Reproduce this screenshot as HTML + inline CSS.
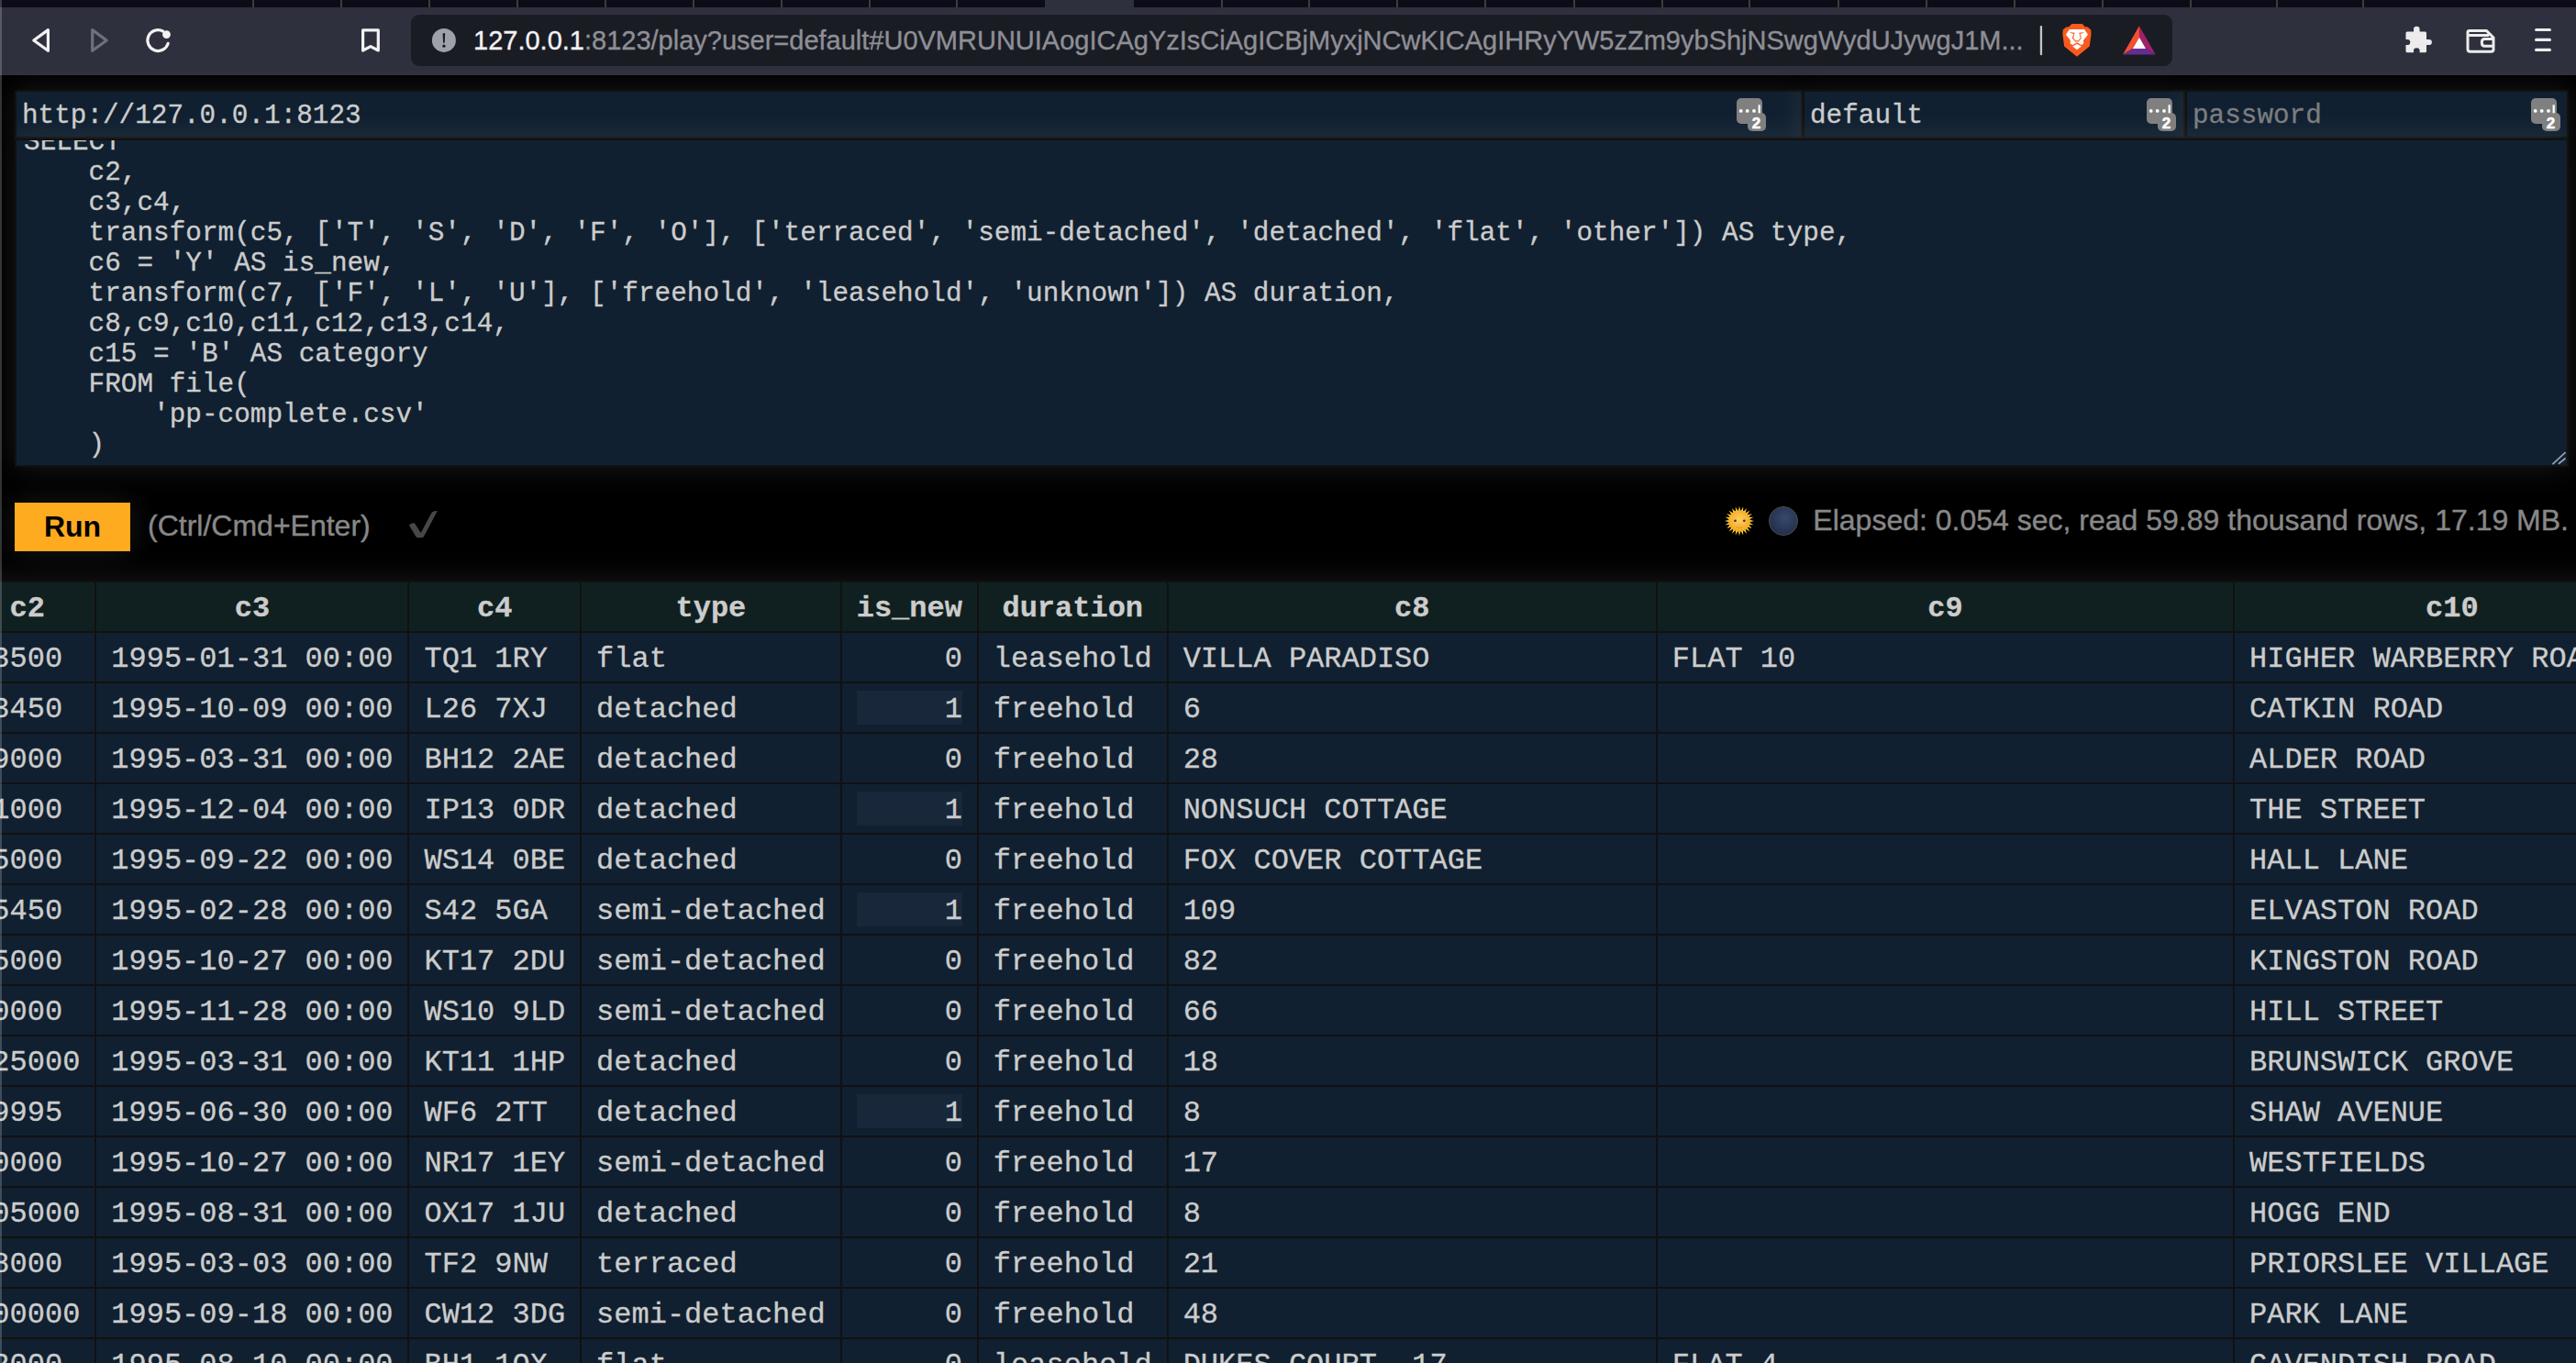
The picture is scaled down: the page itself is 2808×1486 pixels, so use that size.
<!DOCTYPE html>
<html><head><meta charset="utf-8">
<style>
html,body{margin:0;padding:0;}
body{width:2808px;height:1486px;overflow:hidden;position:relative;background:#000;font-family:"Liberation Sans",sans-serif;}
.abs{position:absolute;}
#tabs{left:0;top:0;width:2808px;height:8px;background:#0b0c17;}
#tabs i{position:absolute;top:0;width:2px;height:8px;background:#3d3c38;}
#acttab{position:absolute;left:1139px;top:0;width:97px;height:8px;background:#2e303e;}
#toolbar{left:0;top:8px;width:2808px;height:74px;background:#2e303e;}
#winborder{left:0;top:0;width:2px;height:1486px;background:rgba(255,255,255,0.2);z-index:50;}
#addr{left:448px;top:16px;width:1920px;height:56px;border-radius:9px;background:#1a1c24;}
#addrtext{z-index:6;left:516px;top:24px;font-size:29px;line-height:40px;color:#8e8f96;white-space:nowrap;-webkit-text-stroke:0.35px #8e8f96;}
#addrtext b{-webkit-text-stroke:0.35px #f2f2f4;}
#addrtext b{font-weight:normal;color:#f2f2f4;}
/* page */
.mono{font-family:"Liberation Mono",monospace;}
.shadow{box-shadow:0 0 32px rgba(255,255,255,0.1);}
.inp{position:absolute;top:98px;height:53px;box-sizing:border-box;border:2px solid #111;background:#102030;color:#ccc;font-size:29.33px;line-height:33px;padding:10px 8px 6px 6px;-webkit-text-stroke:0.3px currentColor;}
#url{left:16px;width:1949px;}
#user{left:1965px;width:417px;}
#pass{left:2382px;width:418px;color:#7b7d80;}
#query{position:absolute;left:16px;top:151px;width:2784px;height:358px;box-sizing:border-box;border:2px solid #111;background:#102030;color:#ccc;font-size:29.33px;line-height:33px;overflow:hidden;letter-spacing:0.03px;-webkit-text-stroke:0.3px #ccc;}
#query pre{margin:0;font:inherit;position:absolute;left:8px;top:-14px;white-space:pre;}
#run{position:absolute;left:16px;top:548px;width:126px;height:53px;background:#ffab1f;color:#000;font-weight:bold;font-size:32px;line-height:53px;text-align:center;}
#hint{position:absolute;left:161px;top:536px;font-size:32px;line-height:74px;color:#888;-webkit-text-stroke:0.4px #888;}

#stats{position:absolute;right:8px;top:542px;font-size:32px;line-height:50px;color:#888;white-space:nowrap;-webkit-text-stroke:0.4px #888;}
#data{position:absolute;left:-45.9px;top:633px;width:3400px;}
.tr{display:flex;height:55px;}
.c{flex:none;box-sizing:border-box;border-left:2px solid #111;border-top:2px solid #111;padding:10px 16px 6px;height:55px;line-height:37px;background:#102030;color:#ccc;font-size:32px;white-space:pre;overflow:hidden;-webkit-text-stroke:0.3px #ccc;}
.th .c{background:#102020;font-weight:bold;text-align:center;}
.c.r{text-align:right;}
.c.bar{background:linear-gradient(#18283a,#18283a) 16px 8px/calc(100% - 32px) 37px no-repeat,#102030;}
.w0{width:149.2px}.w1{width:341.2px}.w2{width:187.6px}.w3{width:283.6px}.w4{width:149.2px}.w5{width:206.8px}.w6{width:533.2px}.w7{width:629.2px}.w8{width:475.6px}
</style></head>
<body>
<div id="tabs" class="abs"><i style="left:275.2px"></i><i style="left:370.6px"></i><i style="left:467.0px"></i><i style="left:563.0px"></i><i style="left:659.4px"></i><i style="left:754.8px"></i><i style="left:850.7px"></i><i style="left:946.6px"></i><i style="left:1042.0px"></i><i style="left:1331.0px"></i><i style="left:1425.8px"></i><i style="left:1522.3px"></i><i style="left:1618.2px"></i><i style="left:1714.6px"></i><i style="left:1810.5px"></i><i style="left:1906.4px"></i><i style="left:2003.0px"></i><i style="left:2098.8px"></i><i style="left:2194.7px"></i><i style="left:2290.6px"></i><i style="left:2386.5px"></i><i style="left:2481.4px"></i><i style="left:2574.6px"></i><div id="acttab"></div></div>
<div id="toolbar" class="abs"></div>
<div id="addr" class="abs"></div>
<svg id="icons" class="abs" style="left:0;top:0;z-index:5" width="2808" height="82" viewBox="0 0 2808 82">
<g fill="none" stroke-linecap="round" stroke-linejoin="round" stroke-width="3.2">
<path d="M52.4 32.6 L36.8 44 L52.4 55.2 Z" stroke="#f2f2f2"/>
<path d="M100.7 32.6 L116.2 44 L100.7 55.2 Z" stroke="#6e717d"/>
<path d="M183.2 47.4 A11.4 11.4 0 1 1 177.6 34" stroke="#f2f2f2"/>
<path d="M395.6 32.8 H412.3 V55 L404 50.6 L395.6 55 Z" stroke="#f2f2f2"/>
<path d="M2764.6 32.5 H2779.4 M2764.6 43.4 H2779.4 M2764.6 54.4 H2779.4" stroke="#ececec"/>
<path d="M2690 35 Q2690 33.6 2692 33.6 H2710.5 L2718 41 V54 Q2718 56.2 2715.5 56.2 H2692.5 Q2690 56.2 2690 53.5 Z M2691.5 38.6 H2712" stroke="#ececec" stroke-width="3"/>
<path d="M2716.5 42.5 H2708.5 Q2705.3 42.5 2705.3 46.3 Q2705.3 50.3 2708.5 50.3 H2716.5" stroke="#ececec" stroke-width="3"/>
</g>
<circle cx="181.5" cy="37.6" r="4.4" fill="#f2f2f2"/>
<path fill="#ececec" d="M2622.5 36 Q2622.5 34.4 2624 34.4 H2631 V32 A3.3 3.3 0 0 1 2637.6 32 V34.4 H2643.5 Q2645 34.4 2645 36 V42.9 H2647.8 A3.1 3.1 0 0 1 2647.8 49.1 H2645 V55.8 Q2645 57.3 2643.5 57.3 H2637.6 V55.6 A3.3 3.3 0 0 0 2631 55.6 V57.3 H2624 Q2622.5 57.3 2622.5 55.8 V49.1 H2624.2 A3.1 3.1 0 0 0 2624.2 42.9 H2622.5 Z"/>
<circle cx="483.9" cy="43.9" r="13" fill="#9ea1a9"/>
<path d="M482.6 36.2 H485.2 L484.7 46.8 H483.1 Z" fill="#191b23"/>
<circle cx="483.9" cy="50.2" r="1.6" fill="#191b23"/>
<rect x="2223.8" y="28" width="2.3" height="32.2" rx="1" fill="#c2c3c7"/>
<path fill="#fb5a1f" d="M2258.38 26.05 L2269.83 26.05 L2272.76 29.28 L2275.69 29.58 L2279.22 32.51 L2279.51 37.50 L2277.75 50.41 L2263.96 61.86 L2250.16 50.41 L2248.40 37.50 L2248.70 32.51 L2252.22 29.58 L2255.15 29.28 Z"/>
<path fill="#ffffff" d="M2255.74 31.92 L2272.17 31.92 L2275.99 37.79 L2271.00 43.96 L2271.29 47.48 L2268.94 48.94 L2263.96 46.30 L2259.26 48.94 L2256.62 47.48 L2256.91 43.96 L2251.92 37.79 Z"/>
<path fill="#fb5a1f" d="M2255.74 35.01 L2261.61 35.74 L2260.14 41.61 L2262.49 44.25 L2265.42 44.25 L2267.77 41.61 L2266.30 35.74 L2272.17 35.01 L2269.83 36.33 L2267.48 36.91 L2268.94 41.61 L2265.72 45.42 L2262.20 45.42 L2258.67 41.61 L2260.43 36.91 L2258.09 36.33 Z"/>
<path fill="#ffffff" d="M2259.26 50.41 L2263.96 48.06 L2268.94 50.41 L2263.96 54.23 Z"/>
<path fill="#f4502f" d="M2331.9 28.2 L2314 59.6 L2324.8 53 L2332 40.7 Z"/>
<path fill="#a21f6a" d="M2331.9 28.2 L2349.8 59.6 L2339 53 L2332 40.7 Z"/>
<path fill="#662d91" d="M2314 59.6 H2349.8 L2339 53 H2324.8 Z"/>
<path fill="#ffffff" d="M2332 40.7 L2324.8 53 H2339 Z"/>
</svg>
<div id="addrtext" class="abs"><b>127.0.0.1</b>:8123/play?user=default#U0VMRUNUIAogICAgYzIsCiAgICBjMyxjNCwKICAgIHRyYW5zZm9ybShjNSwgWydUJywgJ1M...</div>

<div class="inp mono shadow" id="url">http://127.0.0.1:8123</div>
<div class="inp mono shadow" id="user">default</div>
<div class="inp mono shadow" id="pass">password</div>
<div id="query" class="mono shadow"><pre>SELECT
    c2,
    c3,c4,
    transform(c5, ['T', 'S', 'D', 'F', 'O'], ['terraced', 'semi-detached', 'detached', 'flat', 'other']) AS type,
    c6 = 'Y' AS is_new,
    transform(c7, ['F', 'L', 'U'], ['freehold', 'leasehold', 'unknown']) AS duration,
    c8,c9,c10,c11,c12,c13,c14,
    c15 = 'B' AS category
    FROM file(
        'pp-complete.csv'
    )</pre></div>
<svg class="abs" style="left:1893px;top:107px;z-index:4" width="34" height="38" viewBox="0 0 34 38">
<rect x="0" y="0" width="28" height="28" rx="5" fill="#808080"/>
<rect x="12" y="16" width="20" height="20" rx="5" fill="#808080"/>
<circle cx="4.7" cy="13.9" r="1.9" fill="#fff"/><circle cx="11.7" cy="13.9" r="1.9" fill="#fff"/><circle cx="19" cy="13.9" r="1.9" fill="#fff"/>
<rect x="23.6" y="7.3" width="2.2" height="9" fill="#fff"/>
<text x="21.5" y="33" font-family="Liberation Sans" font-weight="bold" font-size="17" fill="#fff" stroke="#fff" stroke-width="0.6" text-anchor="middle">2</text>
</svg><svg class="abs" style="left:2340px;top:107px;z-index:4" width="34" height="38" viewBox="0 0 34 38">
<rect x="0" y="0" width="28" height="28" rx="5" fill="#808080"/>
<rect x="12" y="16" width="20" height="20" rx="5" fill="#808080"/>
<circle cx="4.7" cy="13.9" r="1.9" fill="#fff"/><circle cx="11.7" cy="13.9" r="1.9" fill="#fff"/><circle cx="19" cy="13.9" r="1.9" fill="#fff"/>
<rect x="23.6" y="7.3" width="2.2" height="9" fill="#fff"/>
<text x="21.5" y="33" font-family="Liberation Sans" font-weight="bold" font-size="17" fill="#fff" stroke="#fff" stroke-width="0.6" text-anchor="middle">2</text>
</svg><svg class="abs" style="left:2759px;top:107px;z-index:4" width="34" height="38" viewBox="0 0 34 38">
<rect x="0" y="0" width="28" height="28" rx="5" fill="#808080"/>
<rect x="12" y="16" width="20" height="20" rx="5" fill="#808080"/>
<circle cx="4.7" cy="13.9" r="1.9" fill="#fff"/><circle cx="11.7" cy="13.9" r="1.9" fill="#fff"/><circle cx="19" cy="13.9" r="1.9" fill="#fff"/>
<rect x="23.6" y="7.3" width="2.2" height="9" fill="#fff"/>
<text x="21.5" y="33" font-family="Liberation Sans" font-weight="bold" font-size="17" fill="#fff" stroke="#fff" stroke-width="0.6" text-anchor="middle">2</text>
</svg>
<svg class="abs" style="left:2780px;top:490px;z-index:3" width="20" height="20" viewBox="0 0 20 20"><path d="M3 15.7 L16 3.6 M9.5 15.2 L16 10" stroke="#9a9ea6" stroke-width="1.8" stroke-linecap="round"/></svg>
<div id="run" class="shadow">Run</div>
<div id="hint">(Ctrl/Cmd+Enter)</div>
<svg class="abs" style="left:0;top:0" width="500" height="600" viewBox="0 0 500 600"><path d="M445.9 572.6 Q448.5 570 451.8 570.2 L458.7 580.9 L470.8 558.4 Q473.5 557 476.8 557.1 L462 585 Q461 586.3 459.5 586.3 L455.2 586.2 Q454 586.1 453.3 585 Z" fill="#474747"/></svg>
<svg class="abs" style="left:1880.3px;top:552.2px" width="32" height="32" viewBox="0 0 31.4 31.4">
<defs><radialGradient id="sg" cx="50%" cy="45%" r="55%"><stop offset="0" stop-color="#ffd25a"/><stop offset="1" stop-color="#f5a623"/></radialGradient>
<radialGradient id="mg" cx="55%" cy="40%" r="60%"><stop offset="0" stop-color="#36496c"/><stop offset="1" stop-color="#222f4a"/></radialGradient></defs>
<path d="M26.64 14.55L31.50 15.70L26.64 16.85ZM26.56 17.42L30.96 19.79L25.97 19.64ZM25.75 20.17L29.38 23.60L24.60 22.17ZM24.25 22.62L26.87 26.87L22.62 24.25ZM22.17 24.60L23.60 29.38L20.17 25.75ZM19.64 25.97L19.79 30.96L17.42 26.56ZM16.85 26.64L15.70 31.50L14.55 26.64ZM13.98 26.56L11.61 30.96L11.76 25.97ZM11.23 25.75L7.80 29.38L9.23 24.60ZM8.78 24.25L4.53 26.87L7.15 22.62ZM6.80 22.17L2.02 23.60L5.65 20.17ZM5.43 19.64L0.44 19.79L4.84 17.42ZM4.76 16.85L-0.10 15.70L4.76 14.55ZM4.84 13.98L0.44 11.61L5.43 11.76ZM5.65 11.23L2.02 7.80L6.80 9.23ZM7.15 8.78L4.53 4.53L8.78 7.15ZM9.23 6.80L7.80 2.02L11.23 5.65ZM11.76 5.43L11.61 0.44L13.98 4.84ZM14.55 4.76L15.70 -0.10L16.85 4.76ZM17.42 4.84L19.79 0.44L19.64 5.43ZM20.17 5.65L23.60 2.02L22.17 6.80ZM22.62 7.15L26.87 4.53L24.25 8.78ZM24.60 9.23L29.38 7.80L25.75 11.23ZM25.97 11.76L30.96 11.61L26.56 13.98Z" fill="#f6d23a"/>
<circle cx="15.7" cy="15.7" r="11.6" fill="url(#sg)"/>
<circle cx="11.3" cy="15.5" r="1.3" fill="#3a2a55"/><circle cx="20.9" cy="15.5" r="1.3" fill="#3a2a55"/>
<path d="M12.3 21.6 Q15.7 24.6 19.1 21.6" stroke="#e0962a" stroke-width="1" fill="none"/><path d="M14.6 19 L15.7 20.4 L16.8 19" stroke="#e8a040" stroke-width="0.8" fill="none"/>
</svg>
<svg class="abs" style="left:1928.2px;top:552.3px" width="32" height="32" viewBox="0 0 31.2 31.2">
<circle cx="15.6" cy="15.6" r="15.2" fill="url(#mg)" stroke="#4a4d52" stroke-width="0.9"/>
</svg>
<div id="stats">Elapsed: 0.054 sec, read 59.89 thousand rows, 17.19 MB.</div>

<div id="data" class="mono shadow">
<div class="tr th"><div class="c w0">c2</div><div class="c w1">c3</div><div class="c w2">c4</div><div class="c w3">type</div><div class="c w4">is_new</div><div class="c w5">duration</div><div class="c w6">c8</div><div class="c w7">c9</div><div class="c w8">c10</div></div>
<div class="tr"><div class="c w0">73500</div><div class="c w1">1995-01-31 00:00</div><div class="c w2">TQ1 1RY</div><div class="c w3">flat</div><div class="c w4 r">0</div><div class="c w5">leasehold</div><div class="c w6">VILLA PARADISO</div><div class="c w7">FLAT 10</div><div class="c w8">HIGHER WARBERRY ROAD</div></div>
<div class="tr"><div class="c w0">63450</div><div class="c w1">1995-10-09 00:00</div><div class="c w2">L26 7XJ</div><div class="c w3">detached</div><div class="c w4 r bar">1</div><div class="c w5">freehold</div><div class="c w6">6</div><div class="c w7"></div><div class="c w8">CATKIN ROAD</div></div>
<div class="tr"><div class="c w0">89000</div><div class="c w1">1995-03-31 00:00</div><div class="c w2">BH12 2AE</div><div class="c w3">detached</div><div class="c w4 r">0</div><div class="c w5">freehold</div><div class="c w6">28</div><div class="c w7"></div><div class="c w8">ALDER ROAD</div></div>
<div class="tr"><div class="c w0">81000</div><div class="c w1">1995-12-04 00:00</div><div class="c w2">IP13 0DR</div><div class="c w3">detached</div><div class="c w4 r bar">1</div><div class="c w5">freehold</div><div class="c w6">NONSUCH COTTAGE</div><div class="c w7"></div><div class="c w8">THE STREET</div></div>
<div class="tr"><div class="c w0">65000</div><div class="c w1">1995-09-22 00:00</div><div class="c w2">WS14 0BE</div><div class="c w3">detached</div><div class="c w4 r">0</div><div class="c w5">freehold</div><div class="c w6">FOX COVER COTTAGE</div><div class="c w7"></div><div class="c w8">HALL LANE</div></div>
<div class="tr"><div class="c w0">45450</div><div class="c w1">1995-02-28 00:00</div><div class="c w2">S42 5GA</div><div class="c w3">semi-detached</div><div class="c w4 r bar">1</div><div class="c w5">freehold</div><div class="c w6">109</div><div class="c w7"></div><div class="c w8">ELVASTON ROAD</div></div>
<div class="tr"><div class="c w0">65000</div><div class="c w1">1995-10-27 00:00</div><div class="c w2">KT17 2DU</div><div class="c w3">semi-detached</div><div class="c w4 r">0</div><div class="c w5">freehold</div><div class="c w6">82</div><div class="c w7"></div><div class="c w8">KINGSTON ROAD</div></div>
<div class="tr"><div class="c w0">60000</div><div class="c w1">1995-11-28 00:00</div><div class="c w2">WS10 9LD</div><div class="c w3">semi-detached</div><div class="c w4 r">0</div><div class="c w5">freehold</div><div class="c w6">66</div><div class="c w7"></div><div class="c w8">HILL STREET</div></div>
<div class="tr"><div class="c w0">125000</div><div class="c w1">1995-03-31 00:00</div><div class="c w2">KT11 1HP</div><div class="c w3">detached</div><div class="c w4 r">0</div><div class="c w5">freehold</div><div class="c w6">18</div><div class="c w7"></div><div class="c w8">BRUNSWICK GROVE</div></div>
<div class="tr"><div class="c w0">79995</div><div class="c w1">1995-06-30 00:00</div><div class="c w2">WF6 2TT</div><div class="c w3">detached</div><div class="c w4 r bar">1</div><div class="c w5">freehold</div><div class="c w6">8</div><div class="c w7"></div><div class="c w8">SHAW AVENUE</div></div>
<div class="tr"><div class="c w0">50000</div><div class="c w1">1995-10-27 00:00</div><div class="c w2">NR17 1EY</div><div class="c w3">semi-detached</div><div class="c w4 r">0</div><div class="c w5">freehold</div><div class="c w6">17</div><div class="c w7"></div><div class="c w8">WESTFIELDS</div></div>
<div class="tr"><div class="c w0">105000</div><div class="c w1">1995-08-31 00:00</div><div class="c w2">OX17 1JU</div><div class="c w3">detached</div><div class="c w4 r">0</div><div class="c w5">freehold</div><div class="c w6">8</div><div class="c w7"></div><div class="c w8">HOGG END</div></div>
<div class="tr"><div class="c w0">38000</div><div class="c w1">1995-03-03 00:00</div><div class="c w2">TF2 9NW</div><div class="c w3">terraced</div><div class="c w4 r">0</div><div class="c w5">freehold</div><div class="c w6">21</div><div class="c w7"></div><div class="c w8">PRIORSLEE VILLAGE</div></div>
<div class="tr"><div class="c w0">100000</div><div class="c w1">1995-09-18 00:00</div><div class="c w2">CW12 3DG</div><div class="c w3">semi-detached</div><div class="c w4 r">0</div><div class="c w5">freehold</div><div class="c w6">48</div><div class="c w7"></div><div class="c w8">PARK LANE</div></div>
<div class="tr"><div class="c w0">32000</div><div class="c w1">1995-08-10 00:00</div><div class="c w2">BH1 1QX</div><div class="c w3">flat</div><div class="c w4 r">0</div><div class="c w5">leasehold</div><div class="c w6">DUKES COURT, 17</div><div class="c w7">FLAT 4</div><div class="c w8">CAVENDISH ROAD</div></div>
</div>
<div id="winborder" class="abs"></div>
</body></html>
